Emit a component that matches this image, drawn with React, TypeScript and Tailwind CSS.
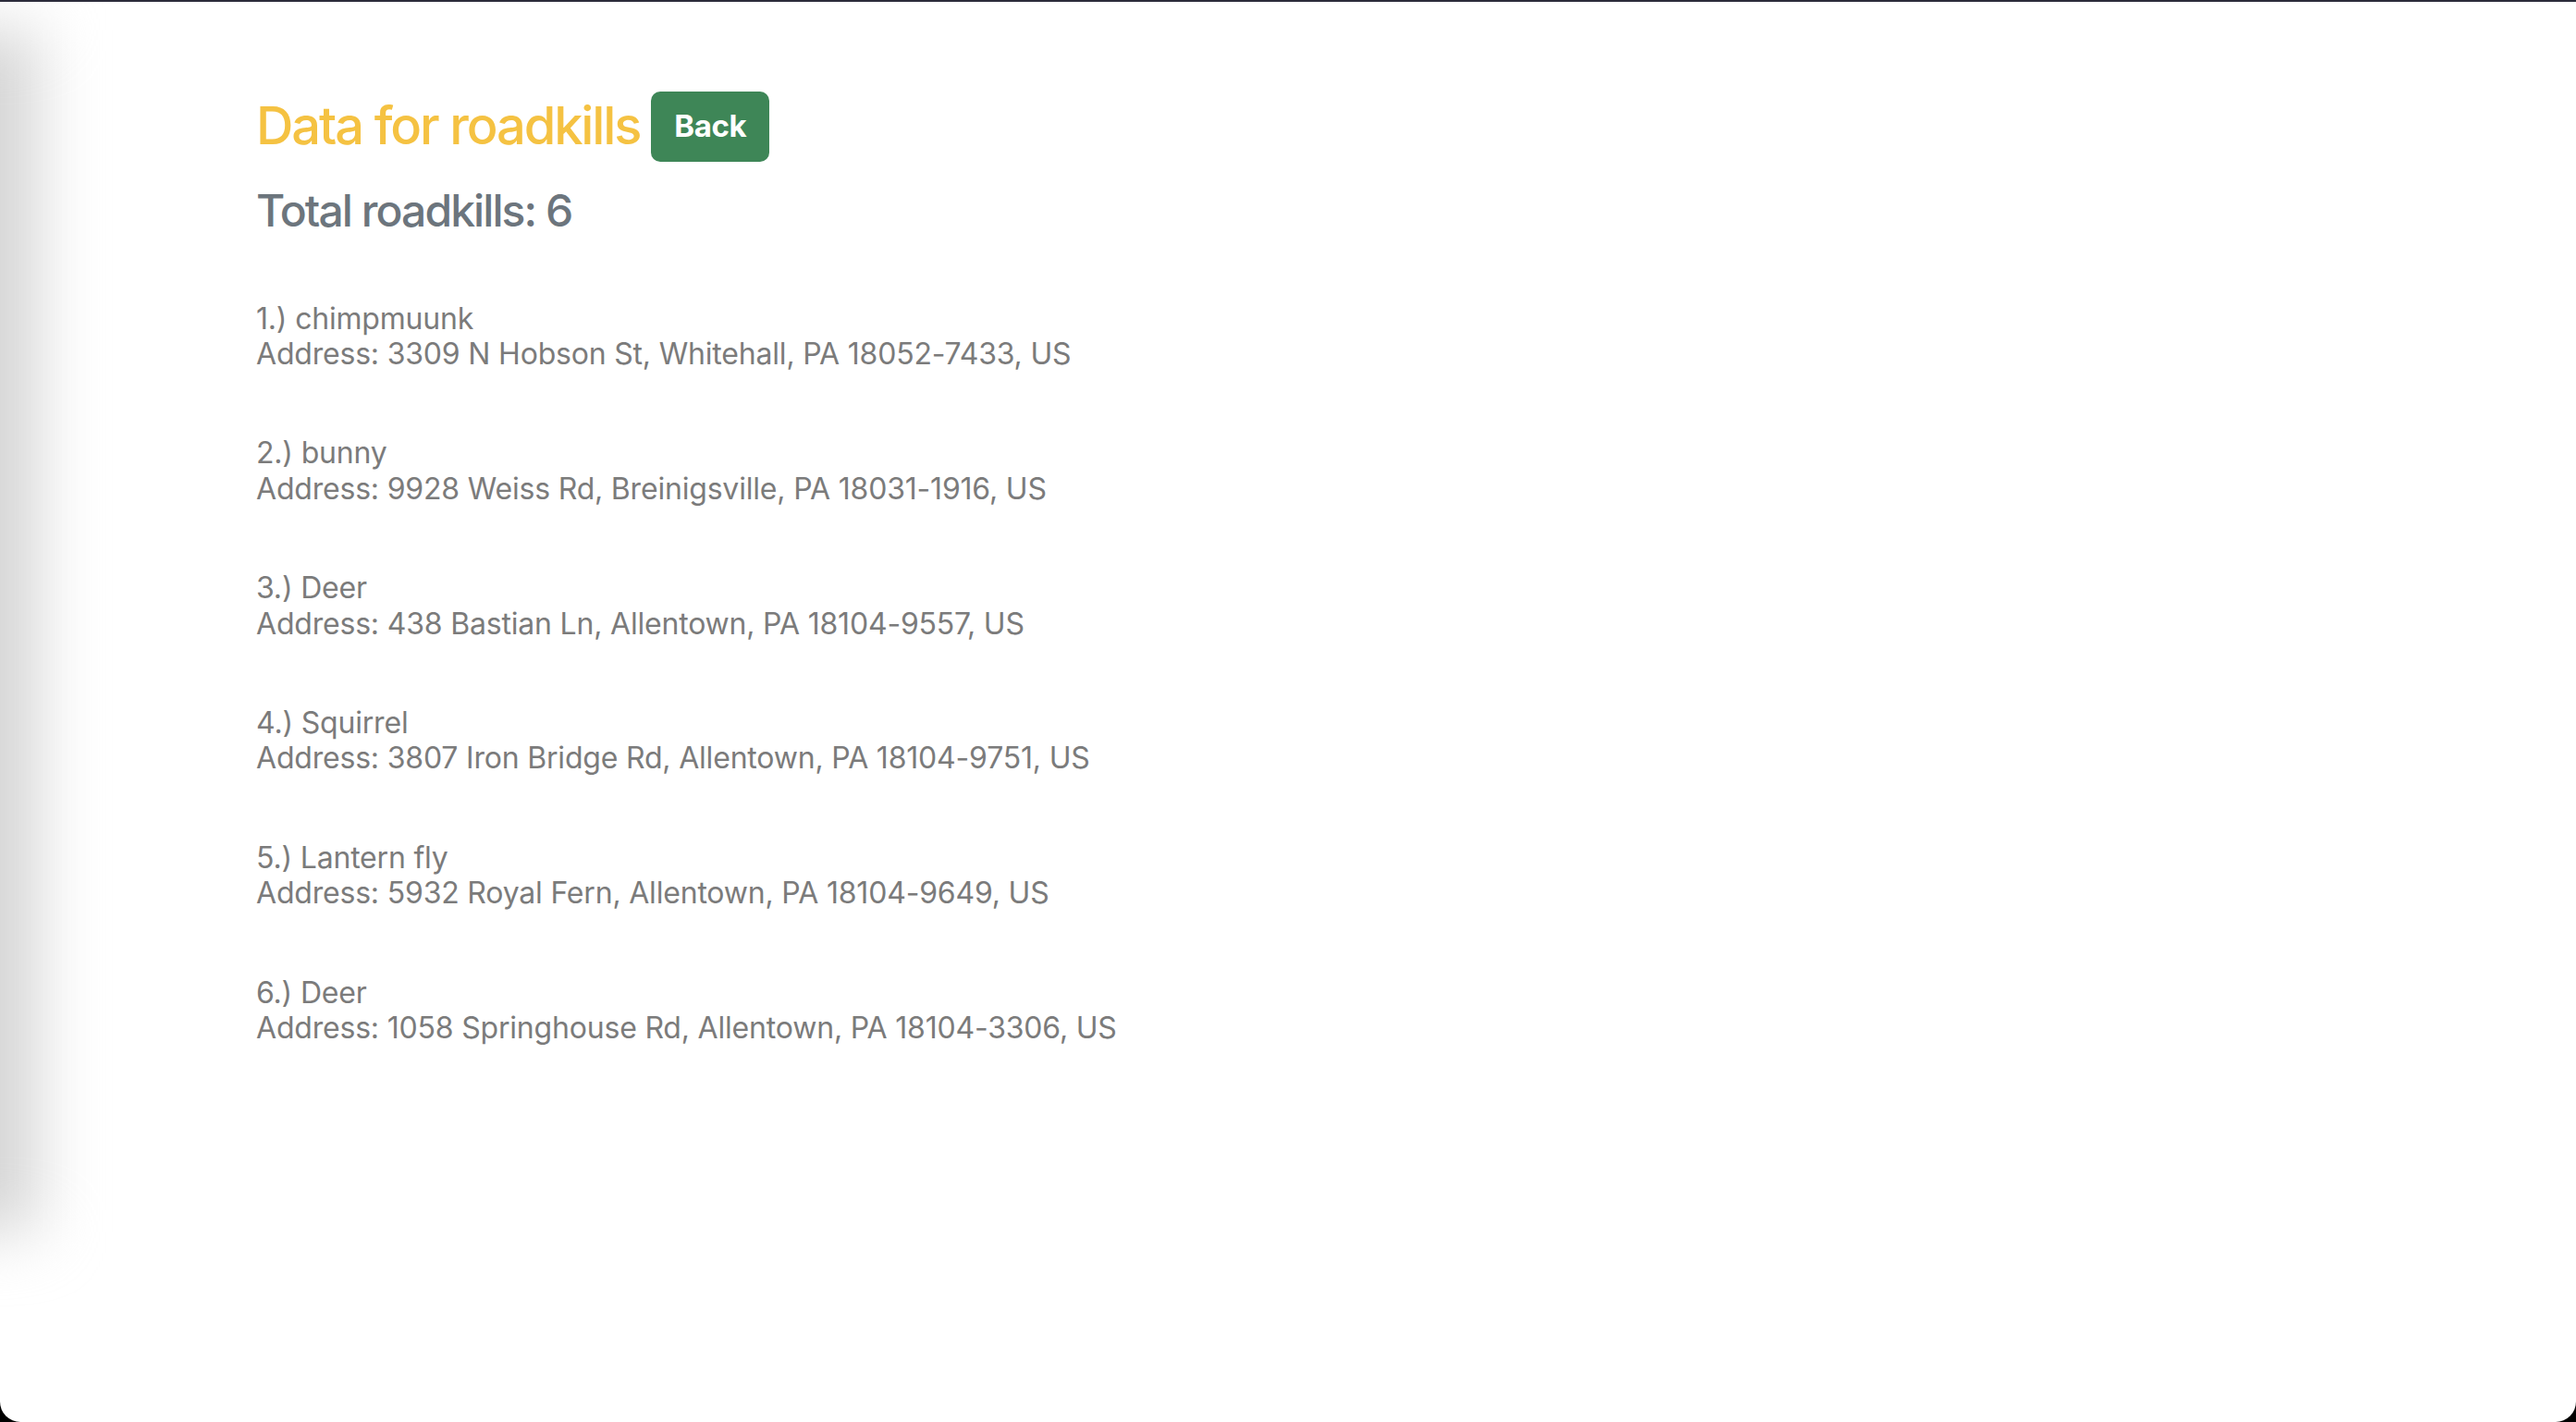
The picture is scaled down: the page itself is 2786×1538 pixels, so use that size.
import React from 'react';

type Roadkill = { name: string; address: string };

const roadkills: Roadkill[] = [
  { name: 'chimpmuunk', address: '3309 N Hobson St, Whitehall, PA 18052-7433, US' },
  { name: 'bunny', address: '9928 Weiss Rd, Breinigsville, PA 18031-1916, US' },
  { name: 'Deer', address: '438 Bastian Ln, Allentown, PA 18104-9557, US' },
  { name: 'Squirrel', address: '3807 Iron Bridge Rd, Allentown, PA 18104-9751, US' },
  { name: 'Lantern fly', address: '5932 Royal Fern, Allentown, PA 18104-9649, US' },
  { name: 'Deer', address: '1058 Springhouse Rd, Allentown, PA 18104-3306, US' },
];

export default function App() {
  return (
    <div className="h-[1538px] w-full bg-black font-['Inter','Noto_Sans',sans-serif]">
      <div className="relative h-full overflow-hidden rounded-b-[22px] border-t-2 border-[#2b2b3a] bg-white">
        {/* soft shadow from a window behind, on the left edge */}
        <div className="pointer-events-none absolute -left-[70px] top-[30px] h-[1300px] w-[110px] bg-[#d4d4d4] blur-[34px]" />

        <div className="relative pl-[277px] pt-[97px]">
          <div className="flex items-center gap-[12px]">
            <h3 className="text-[56px] leading-[1.2] font-medium tracking-[-0.038em] text-[#f5c242]">Data for roadkills</h3>
            <button className="h-[76px] w-[128px] rounded-[10px] bg-[#3e8657] text-[33px] font-bold tracking-[-0.01em] text-white">Back</button>
          </div>
          <h4 className="mt-[24px] text-[48px] leading-[1.2] font-medium tracking-[-0.04em] text-[#6c757d]">Total roadkills: {roadkills.length}</h4>

          <div className="mt-[69px] flex flex-col gap-[69px]">
            {roadkills.map((r, i) => (
              <div key={i} className="text-[32px] leading-[1.2] tracking-[-0.006em] text-[#7b7b7b]">
                <p>{i + 1}.) {r.name}</p>
                <p>Address: {r.address}</p>
              </div>
            ))}
          </div>
        </div>
      </div>
    </div>
  );
}
